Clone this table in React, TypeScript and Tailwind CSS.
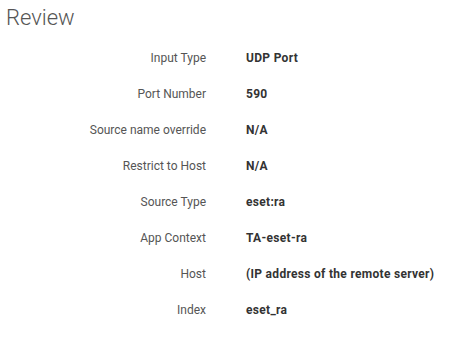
import React from "react";

const rows: [string, string][] = [
  ["Input Type", "UDP Port"],
  ["Port Number", "590"],
  ["Source name override", "N/A"],
  ["Restrict to Host", "N/A"],
  ["Source Type", "eset:ra"],
  ["App Context", "TA-eset-ra"],
  ["Host", "(IP address of the remote server)"],
  ["Index", "eset_ra"],
];

const App = () => {
  return (
    <div className="w-[460px] h-[349px] bg-white font-['Roboto',sans-serif] text-[#333]">
      <h1 className="pl-[6px] pt-[4px] text-[22px] leading-[28px] font-light text-[#555]">
        Review
      </h1>
      <div className="mt-[8px]">
        {rows.map(([label, value]) => (
          <div key={label} className="flex items-center h-[36px] text-[12px]">
            <div className="w-[206px] text-right text-[#555]">{label}</div>
            <div className="ml-[40px] font-bold tracking-[0.3px]">{value}</div>
          </div>
        ))}
      </div>
    </div>
  );
};

export default App;
